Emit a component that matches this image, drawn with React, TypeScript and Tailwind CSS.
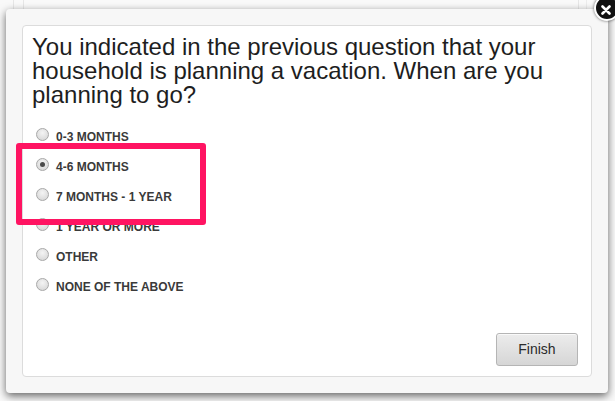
import React from "react";

const options = [
  { label: "0-3 MONTHS", checked: false },
  { label: "4-6 MONTHS", checked: true },
  { label: "7 MONTHS - 1 YEAR", checked: false },
  { label: "1 YEAR OR MORE", checked: false },
  { label: "OTHER", checked: false },
  { label: "NONE OF THE ABOVE", checked: false },
];

function Radio({ checked }: { checked: boolean }) {
  return (
    <span className="mt-[6px] flex h-[13px] w-[13px] shrink-0 items-center justify-center rounded-full border border-[#a8a8a8] bg-[radial-gradient(circle_at_50%_35%,#f4f4f4_0%,#dcdcdc_70%,#cfcfcf_100%)]">
      {checked && <span className="h-[5px] w-[5px] rounded-full bg-[#4a4a4a]" />}
    </span>
  );
}

export default function App() {
  return (
    <div className="relative h-[401px] w-[615px] overflow-hidden bg-[#f9f9f9] pl-[6px] pt-[9px] font-['Liberation_Sans',Arial,sans-serif]">
      {/* page behind the modal */}
      <div className="absolute left-[13px] top-0 h-[12px] w-px bg-[#e6e6e6]" />
      <div className="absolute left-[23px] top-0 h-[12px] w-px bg-[#e6e6e6]" />
      <div className="absolute left-[578px] top-0 h-[12px] w-px bg-[#e6e6e6]" />
      <div className="absolute left-[586px] top-0 h-[12px] w-px bg-[#ececec]" />

      <div className="relative h-[384px] w-[602px] rounded-[4px] bg-[#f7f7f7] p-4 shadow-[0_3px_9px_rgba(0,0,0,0.6)]">
        <div className="flex h-full flex-col rounded-[4px] border border-[#dcdcdc] bg-white pl-[9px] pt-[9px]">
          <p className="pr-[8px] text-[24px] leading-[24px] text-[#1e1e1e]">
            You indicated in the previous question that your household is planning a vacation. When are you planning to go?
          </p>
          <div className="mt-[15px] flex flex-col pl-[4px]">
            {options.map((o) => (
              <label key={o.label} className="flex h-[30px] items-start gap-[7px]">
                <Radio checked={o.checked} />
                <span className="text-[12px] font-bold leading-[30px] text-[#3a3a3a]">{o.label}</span>
              </label>
            ))}
          </div>
          <div className="mt-auto flex justify-end pb-[10px] pr-[13px]">
            <button className="h-[33px] w-[82px] rounded-[3px] border border-[#b5b5b5] bg-[linear-gradient(#ececec,#d6d6d6)] text-[14px] text-[#2a2a2a] shadow-[inset_0_1px_0_rgba(255,255,255,0.7)]">
              Finish
            </button>
          </div>
        </div>
      </div>

      {/* close button */}
      <div className="absolute left-[594px] top-[-5px] flex h-[26px] w-[26px] items-center justify-center rounded-full border-2 border-white bg-[#111] shadow-[0_0_3px_rgba(0,0,0,0.6)]">
        <svg width="10" height="10" viewBox="0 0 10 10" className="ml-[-2px] mt-[4px]">
          <path d="M1.5 1.5 L8.5 8.5 M8.5 1.5 L1.5 8.5" stroke="white" strokeWidth="2.6" strokeLinecap="round" />
        </svg>
      </div>

      {/* highlight annotation */}
      <div className="absolute left-[16px] top-[143px] h-[82px] w-[190px] rounded-[3px] border-[6px] border-[#ff1462]" />
    </div>
  );
}
